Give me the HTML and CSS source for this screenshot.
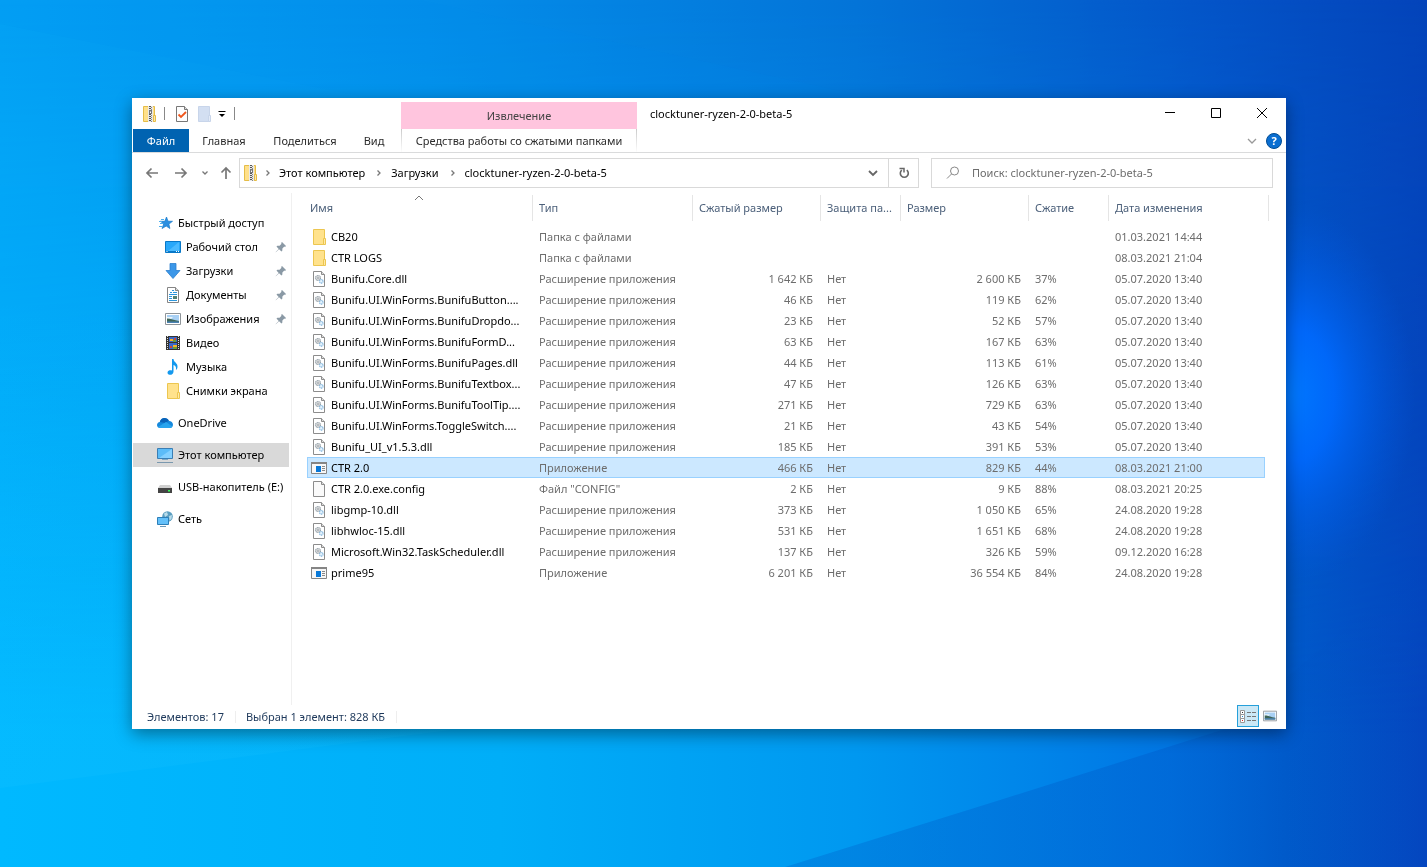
FILE: index.html
```html
<!DOCTYPE html>
<html lang="ru">
<head>
<meta charset="utf-8">
<title>clocktuner-ryzen-2-0-beta-5</title>
<link rel="stylesheet" href="styles.css">
</head>
<body>
<svg class="wallpaper" viewBox="0 0 1427 867" preserveAspectRatio="none" aria-hidden="true">
  <defs>
    <linearGradient id="wbase" x1="0" y1="0" x2="1" y2="0"><stop offset="0" stop-color="#04a0f4"/><stop offset=".3" stop-color="#048eea"/><stop offset=".6" stop-color="#0474d8"/><stop offset=".85" stop-color="#0454c8"/><stop offset="1" stop-color="#0444ba"/></linearGradient>
    <linearGradient id="wlow" x1="0" y1="0" x2="1" y2="0"><stop offset="0" stop-color="#00b9ff"/><stop offset=".35" stop-color="#00aef8"/><stop offset=".6" stop-color="#0098f0"/><stop offset=".82" stop-color="#0076e4"/><stop offset=".9" stop-color="#005ccc"/><stop offset="1" stop-color="#0446bf"/></linearGradient>
    <linearGradient id="wfade" x1="0" y1="0" x2="0" y2="1"><stop offset="0" stop-color="#000"/><stop offset=".85" stop-color="#fff"/></linearGradient>
    <linearGradient id="wbeam" x1="0" y1="0" x2="0" y2="1"><stop offset="0" stop-color="#20c4ff" stop-opacity="0"/><stop offset="1" stop-color="#20c4ff" stop-opacity=".16"/></linearGradient>
    <linearGradient id="wwedge" x1="0" y1="0" x2="1" y2="0"><stop offset="0" stop-color="#0050c0" stop-opacity=".26"/><stop offset=".6" stop-color="#0050c0" stop-opacity=".3"/><stop offset="1" stop-color="#0050c0" stop-opacity="0"/></linearGradient>
    <mask id="wmask"><rect width="1427" height="867" fill="url(#wfade)"/></mask>
    <radialGradient id="wglow"><stop offset="0" stop-color="#0078ff"/><stop offset=".35" stop-color="#006aff" stop-opacity=".9"/><stop offset="1" stop-color="#0058e0" stop-opacity="0"/></radialGradient>
  </defs>
  <rect width="1427" height="867" fill="url(#wbase)"/>
  <rect width="1427" height="867" fill="url(#wlow)" mask="url(#wmask)"/>
  <path d="M785 867 1000 800 1225 729 1427 560V867Z" fill="url(#wwedge)"/>
  <path d="M0 788 450 730V300H0Z" fill="url(#wbeam)"/>
  <path d="M0 0V24L400 104H900L420 0Z" fill="#0088f0" opacity=".08"/>
  <ellipse cx="1290" cy="395" rx="125" ry="190" fill="url(#wglow)"/>
</svg>

<svg class="defs" aria-hidden="true">
  <symbol id="folder" viewBox="0 0 16 16"><path d="M2.500.5h11v15h-11z" fill="#ffe28c" stroke="#ecc650"/><path d="M12.500 9.500h2v6h-2z" fill="#ffe9a6" stroke="#ecc650"/></symbol>
  <symbol id="zip" viewBox="0 0 16 16"><path d="M1.500.5h11v15h-11z" fill="#ffe08a" stroke="#e5bd48"/><path d="M11.500 9.500h2v6h-2z" fill="#ffe9a6" stroke="#e5bd48"/><path d="M6 0h5v16H6z" fill="#e8e8e8"/><path d="M8 0v16" stroke="#555" stroke-width="2" stroke-dasharray="1 1"/><path d="M9.500 0v16" stroke="#888" stroke-dasharray="1 1" stroke-dashoffset="1"/><path d="M7 4h3v4H7z" fill="#777"/><path d="M8 5.500h1V7H8z" fill="#fff"/></symbol>
  <symbol id="dll" viewBox="0 0 16 16"><path d="M2.500.5h8l3 3v12h-11z" fill="#fff" stroke="#8c8c8c"/><path d="M10.500.5v3h3" fill="#ddd" stroke="#8c8c8c"/><circle cx="7" cy="7" r="2.500" fill="#e4e4e4" stroke="#98a4ac" stroke-width="1.200" stroke-dasharray="1.200 .5"/><circle cx="7" cy="7" r=".9" fill="#fff" stroke="#8a949a" stroke-width=".7"/><circle cx="10.300" cy="10.300" r="1.800" fill="#e4f2fc" stroke="#86b8de" stroke-width="1.200" stroke-dasharray="1.200 .5"/></symbol>
  <symbol id="file" viewBox="0 0 16 16"><path d="M2.500.5h8l3 3v12h-11z" fill="#fafafa" stroke="#8c8c8c"/><path d="M10.500.5v3h3" fill="#ddd" stroke="#8c8c8c"/></symbol>
  <symbol id="exe" viewBox="0 0 16 16"><path d="M.5 2.500h15v11H.5z" fill="#f7f7f7" stroke="#858585"/><path d="M0 2h16v2H0z" fill="#858585"/><path d="M5 6h5v6H5z" fill="#0878d8"/><path d="M11 6.500h3M11 8.500h3M11 10.500h3" stroke="#888"/></symbol>
  <symbol id="pin" viewBox="0 0 12 12"><path d="M7 1 11 5 10 6 9.300 5.600 7.400 7.500 7.300 9.800 6.400 10.600 4.100 8.300.8 11.300.7 11 3.700 7.900 1.500 5.600 2.300 4.700 4.600 4.700 6.500 2.800 6.100 2Z" fill="#8a99a5"/></symbol>
  <symbol id="picture" viewBox="0 0 16 16"><path d="M.5 2.500h15v11H.5z" fill="#fff" stroke="#8e9499"/><path d="M2 4h12v8H2z" fill="#a8d0f4"/><path d="M2 6h6l-2 2H2z" fill="#e8f4fc"/><path d="M2 7.500c4 0 7 1.500 12 2.500v2H2z" fill="#3e6658"/><path d="M2 10.500h12V12H2z" fill="#4b82b4"/></symbol>
  <symbol id="chev" viewBox="0 0 8 8"><path d="M2.500 1.500 5 4 2.500 6.500" fill="none" stroke="#777" stroke-width="1.300"/></symbol>
</svg>

<main class="window">
  <header class="top">
    <div class="quick">
      <svg class="i16"><use href="#zip"/></svg><i class="bar"></i>
      <button class="q1" aria-label="Свойства"><svg class="i16" viewBox="0 0 16 16"><path d="M2.500.5h8l3 3v12h-11z" fill="#fdfdfd" stroke="#777"/><path d="M10.500.5v3h3" fill="#ddd" stroke="#777"/><path d="m4.500 8.500 2.500 2.500 5-5" fill="none" stroke="#f0561c" stroke-width="1.800"/></svg></button>
      <button class="q2" aria-label="Новая папка"><svg class="i16" viewBox="0 0 16 16"><path d="M2.500.5h11v15h-11z" fill="#d3dff2" stroke="#c8d5ea"/><path d="M12.500 9.500h2v6h-2z" fill="#e3ebf8" stroke="#c8d5ea"/></svg></button>
      <button class="q3" aria-label="Настройка панели"><svg class="i8" viewBox="0 0 8 8"><path d="M.5 1.500h7" stroke="#000"/><path d="M1 4h6L4 7z"/></svg></button><i class="bar"></i>
    </div>
    <nav class="tabs">
      <button class="tab file">Файл</button><button class="tab home">Главная</button><button class="tab share">Поделиться</button><button class="tab view">Вид</button>
    </nav>
    <div class="context"><span class="extract">Извлечение</span><button class="tab tools">Средства работы со сжатыми папками</button></div>
    <h1 class="title">clocktuner-ryzen-2-0-beta-5</h1>
    <div class="controls">
      <button aria-label="Свернуть"><svg viewBox="0 0 12 12"><path d="M1 5.500h10" stroke="#000"/></svg></button>
      <button aria-label="Развернуть"><svg viewBox="0 0 12 12"><path d="M1.500 1.500h9v9h-9z" fill="none" stroke="#000"/></svg></button>
      <button aria-label="Закрыть"><svg viewBox="0 0 12 12"><path d="m1 1 10 10M11 1 1 11" stroke="#000"/></svg></button>
    </div>
    <div class="help">
      <button aria-label="Развернуть ленту"><svg class="i12" viewBox="0 0 12 12"><path d="m2 4 4 4 4-4" fill="none" stroke="#999" stroke-width="1.300"/></svg></button>
      <button class="round" aria-label="Справка">?</button>
    </div>
  </header>

  <div class="navbar">
    <div class="arrows">
      <button aria-label="Назад"><svg viewBox="0 0 14 14"><path d="M13 7H2M6.500 2.500 2 7l4.500 4.500" fill="none" stroke="#777" stroke-width="1.700"/></svg></button>
      <button aria-label="Вперёд"><svg viewBox="0 0 14 14"><path d="M1 7h11M7.500 2.500 12 7l-4.500 4.500" fill="none" stroke="#777" stroke-width="1.700"/></svg></button>
      <button aria-label="Последние"><svg class="i8" viewBox="0 0 8 8"><path d="m1.500 2.500 2.500 2.500 2.500-2.500" fill="none" stroke="#777" stroke-width="1.300"/></svg></button>
      <button aria-label="Вверх"><svg viewBox="0 0 14 14"><path d="M7 13V2M2.500 6.500 7 2l4.500 4.500" fill="none" stroke="#777" stroke-width="1.700"/></svg></button>
    </div>
    <div class="address">
      <svg class="i16"><use href="#zip"/></svg>
      <svg class="i8"><use href="#chev"/></svg><a href="#">Этот компьютер</a>
      <svg class="i8"><use href="#chev"/></svg><a href="#">Загрузки</a>
      <svg class="i8"><use href="#chev"/></svg><a href="#">clocktuner-ryzen-2-0-beta-5</a>
      <button class="drop" aria-label="Журнал"><svg class="i12" viewBox="0 0 12 12"><path d="m2 4 4 4 4-4" fill="none" stroke="#666" stroke-width="1.800"/></svg></button>
      <button class="refresh" aria-label="Обновить"><svg class="i12" viewBox="0 0 12 12"><path d="M8.800 3.200a4 4 0 1 1-5 0" fill="none" stroke="#666" stroke-width="1.600"/><path d="M1.500 1.500h4.500v4" fill="none" stroke="#666" stroke-width="1.500"/></svg></button>
    </div>
    <label class="search"><svg class="i14" viewBox="0 0 14 14"><circle cx="8.500" cy="5" r="4" fill="none" stroke="#888"/><path d="M5.500 8 1 12.500" stroke="#888"/></svg><input type="search" aria-label="Поиск" placeholder="Поиск: clocktuner-ryzen-2-0-beta-5"></label>
  </div>

  <div class="content">
    <aside class="side">
      <a class="node" href="#"><svg class="i16" viewBox="0 0 16 16"><path d="m9.500 2 1.500 4.200 4.500.1-3.600 2.800 1 4.400-3.700-2.400L5 13.500 6.700 9 3.500 6.300h4.300z" fill="#2b8fe0" stroke="#1479cc" stroke-width=".7"/><path d="M4 4.500h3M2 6.500h3M3 8.500h3M2 11.500h3" stroke="#4fb0ee"/></svg>Быстрый доступ</a>
      <a class="node sub" href="#"><svg class="i16" viewBox="0 0 16 16"><path d="M.5 2.500h15v11H.5z" fill="#28a8fa" stroke="#0878c8"/><path d="M3 12 14 3v9z" fill="#4abaff"/><path d="M1 12.500h14" stroke="#0878c8"/><path d="M1.500 12.500h1M11 12.500h1M13 12.500h1" stroke="#fff"/></svg>Рабочий стол<svg class="pin"><use href="#pin"/></svg></a>
      <a class="node sub" href="#"><svg class="i16" viewBox="0 0 16 16"><path d="M5 .5h6v7h4L8 15.500 1 7.500h4z" fill="#3b97e8" stroke="#2b7fce" stroke-width=".8"/></svg>Загрузки<svg class="pin"><use href="#pin"/></svg></a>
      <a class="node sub" href="#"><svg class="i16" viewBox="0 0 16 16"><path d="M2.500.5h8l3 3v12h-11z" fill="#fff" stroke="#858585"/><path d="M10.500.5v3h3" fill="#ddd" stroke="#858585"/><path d="M7 3.500h2M5 5.500h2M8 5.500h4M4 7.500h8M4 9.500h3M4 11.500h3M4 13.500h8" stroke="#2c96dc"/><path d="M8 9h4v3H8z" fill="#538276"/></svg>Документы<svg class="pin"><use href="#pin"/></svg></a>
      <a class="node sub" href="#"><svg class="i16"><use href="#picture"/></svg>Изображения<svg class="pin"><use href="#pin"/></svg></a>
      <a class="node sub" href="#"><svg class="i16" viewBox="0 0 16 16"><path d="M1 1h14v14H1z" fill="#333"/><path d="M2.500 1v14M13.500 1v14" stroke="#ddd" stroke-dasharray="1 1"/><path d="M4 2h8v5H4zM4 8h8v6H4z" fill="#3a67c8"/><path d="M5 4h3v2H5zM8 10h4v2H8z" fill="#f0b429"/><path d="M9 3h2v2H9zM5 11h2v2H5z" fill="#c64b35"/><path d="M8 5h3v2H8zM8 12h4v2H8z" fill="#6a9c39"/></svg>Видео</a>
      <a class="node sub" href="#"><svg class="i16" viewBox="0 0 16 16"><path d="M7 0h1.500c.3 3.500 4.500 4 4 8-.1 1.500-.8 2.500-1.600 3 .8-3-.9-4.500-2.400-5v6.500C8.500 15 6.500 16 4.500 15.800 2 15.500 1.800 12 4.500 11.300 5.500 11 6.300 11.200 7 11.600z" fill="#1499ee"/></svg>Музыка</a>
      <a class="node sub" href="#"><svg class="i16"><use href="#folder"/></svg>Снимки экрана</a>
      <a class="node group" href="#"><svg class="i16" viewBox="0 0 16 16"><path d="M3.500 13C1.300 13 0 11.700 0 10c0-1.600 1.200-2.800 2.800-3C3.500 4.500 5.300 3 7.500 3c2 0 3.500 1 4.300 2.800C14.300 6 16 7.600 16 9.800 16 11.700 14.500 13 12.700 13z" fill="#1588dc"/><path d="M2.800 7C3.500 4.500 5.300 3 7.500 3c2 0 3.500 1 4.300 2.800L8 8z" fill="#0a62b8"/><path d="m1 12 8-5 6.500 4.500c-.6 1-1.600 1.500-2.800 1.500H3.500c-1 0-1.900-.4-2.500-1z" fill="#28a4ee"/></svg>OneDrive</a>
      <a class="node group current" href="#"><svg class="i16" viewBox="0 0 16 16"><path d="M.5 1.500h15v10H.5z" fill="#5cbcf8" stroke="#3a7eb4"/><path d="M2 11 15 2v9z" fill="#84d0ff"/><path d="M5 12.500h6" stroke="#7fa8c4"/><path d="M0 15.500h16" stroke="#7a98ae"/></svg>Этот компьютер</a>
      <a class="node group" href="#"><svg class="i16" viewBox="0 0 16 16"><path d="M3 6h10l2 3H1z" fill="#d0d0d0"/><path d="M1 9h14v5H1z" fill="#444"/><path d="M11 11h2v1.500h-2z" fill="#3f5"/></svg>USB-накопитель (E:)</a>
      <a class="node group" href="#"><svg class="i16" viewBox="0 0 16 16"><circle cx="10.500" cy="5.500" r="5.300" fill="#5a9dc0"/><path d="M7 2.500 10 1l1 3-3 2zM12 5l3-1-.5 4-2 1.500z" fill="#b9dcea"/><path d="M.5 6.500h11v7H.5z" fill="#63c0fa" stroke="#2d7fb8"/><path d="M3 15.500h6" stroke="#6a98b8"/></svg>Сеть</a>
    </aside>

    <section class="list">
      <table class="files">
        <colgroup><col class="c-name"><col class="c-wide"><col class="c-mid"><col class="c-small"><col class="c-mid"><col class="c-small"><col class="c-date"></colgroup>
        <thead><tr><th class="sorted">Имя<svg class="sort" viewBox="0 0 10 6"><path d="M1 5 5 1l4 4" fill="none" stroke="#777"/></svg></th><th>Тип</th><th>Сжатый размер</th><th>Защита па...</th><th>Размер</th><th>Сжатие</th><th>Дата изменения</th></tr></thead>
        <tbody>
        <tr><td><svg class="i16"><use href="#folder"/></svg>CB20</td><td>Папка с файлами</td><td></td><td></td><td></td><td></td><td>01.03.2021 14:44</td></tr>
        <tr><td><svg class="i16"><use href="#folder"/></svg>CTR LOGS</td><td>Папка с файлами</td><td></td><td></td><td></td><td></td><td>08.03.2021 21:04</td></tr>
        <tr><td><svg class="i16"><use href="#dll"/></svg>Bunifu.Core.dll</td><td>Расширение приложения</td><td>1 642 КБ</td><td>Нет</td><td>2 600 КБ</td><td>37%</td><td>05.07.2020 13:40</td></tr>
        <tr><td><svg class="i16"><use href="#dll"/></svg>Bunifu.UI.WinForms.BunifuButton....</td><td>Расширение приложения</td><td>46 КБ</td><td>Нет</td><td>119 КБ</td><td>62%</td><td>05.07.2020 13:40</td></tr>
        <tr><td><svg class="i16"><use href="#dll"/></svg>Bunifu.UI.WinForms.BunifuDropdo...</td><td>Расширение приложения</td><td>23 КБ</td><td>Нет</td><td>52 КБ</td><td>57%</td><td>05.07.2020 13:40</td></tr>
        <tr><td><svg class="i16"><use href="#dll"/></svg>Bunifu.UI.WinForms.BunifuFormD...</td><td>Расширение приложения</td><td>63 КБ</td><td>Нет</td><td>167 КБ</td><td>63%</td><td>05.07.2020 13:40</td></tr>
        <tr><td><svg class="i16"><use href="#dll"/></svg>Bunifu.UI.WinForms.BunifuPages.dll</td><td>Расширение приложения</td><td>44 КБ</td><td>Нет</td><td>113 КБ</td><td>61%</td><td>05.07.2020 13:40</td></tr>
        <tr><td><svg class="i16"><use href="#dll"/></svg>Bunifu.UI.WinForms.BunifuTextbox...</td><td>Расширение приложения</td><td>47 КБ</td><td>Нет</td><td>126 КБ</td><td>63%</td><td>05.07.2020 13:40</td></tr>
        <tr><td><svg class="i16"><use href="#dll"/></svg>Bunifu.UI.WinForms.BunifuToolTip....</td><td>Расширение приложения</td><td>271 КБ</td><td>Нет</td><td>729 КБ</td><td>63%</td><td>05.07.2020 13:40</td></tr>
        <tr><td><svg class="i16"><use href="#dll"/></svg>Bunifu.UI.WinForms.ToggleSwitch....</td><td>Расширение приложения</td><td>21 КБ</td><td>Нет</td><td>43 КБ</td><td>54%</td><td>05.07.2020 13:40</td></tr>
        <tr><td><svg class="i16"><use href="#dll"/></svg>Bunifu_UI_v1.5.3.dll</td><td>Расширение приложения</td><td>185 КБ</td><td>Нет</td><td>391 КБ</td><td>53%</td><td>05.07.2020 13:40</td></tr>
        <tr class="selected"><td><svg class="i16"><use href="#exe"/></svg>CTR 2.0</td><td>Приложение</td><td>466 КБ</td><td>Нет</td><td>829 КБ</td><td>44%</td><td>08.03.2021 21:00</td></tr>
        <tr><td><svg class="i16"><use href="#file"/></svg>CTR 2.0.exe.config</td><td>Файл "CONFIG"</td><td>2 КБ</td><td>Нет</td><td>9 КБ</td><td>88%</td><td>08.03.2021 20:25</td></tr>
        <tr><td><svg class="i16"><use href="#dll"/></svg>libgmp-10.dll</td><td>Расширение приложения</td><td>373 КБ</td><td>Нет</td><td>1 050 КБ</td><td>65%</td><td>24.08.2020 19:28</td></tr>
        <tr><td><svg class="i16"><use href="#dll"/></svg>libhwloc-15.dll</td><td>Расширение приложения</td><td>531 КБ</td><td>Нет</td><td>1 651 КБ</td><td>68%</td><td>24.08.2020 19:28</td></tr>
        <tr><td><svg class="i16"><use href="#dll"/></svg>Microsoft.Win32.TaskScheduler.dll</td><td>Расширение приложения</td><td>137 КБ</td><td>Нет</td><td>326 КБ</td><td>59%</td><td>09.12.2020 16:28</td></tr>
        <tr><td><svg class="i16"><use href="#exe"/></svg>prime95</td><td>Приложение</td><td>6 201 КБ</td><td>Нет</td><td>36 554 КБ</td><td>84%</td><td>24.08.2020 19:28</td></tr>
        </tbody>
      </table>
    </section>
  </div>

  <footer class="status">
    <span>Элементов: 17</span><span>Выбран 1 элемент: 828 КБ</span>
    <div class="views">
      <button class="on" aria-label="Таблица"><svg viewBox="0 0 18 16"><path d="M1.500 2.500h4v4h-4zM1.500 6.500h4v4h-4zM1.500 10.500h4v4h-4z" fill="#fff" stroke="#999"/><path d="M8 4.500h4M13 4.500h4M8 8.500h4M13 8.500h4M8 12.500h4M13 12.500h4" stroke="#777"/><path d="M3 4h1v1H3z" fill="#333"/><path d="M3 8h1v1H3z" fill="#28c"/><path d="M3 12h1v1H3z" fill="#d22"/></svg></button>
      <button aria-label="Крупные значки"><svg viewBox="0 0 16 16"><use href="#picture"/></svg></button>
    </div>
  </footer>
</main>
</body>
</html>
```
FILE: styles.css
```css
* { box-sizing: border-box; }
body {
  margin: 0;
  min-height: 100vh;
  padding: 98px 141px 138px 132px;
  display: flex;
  background: #0484e4;
  font: 11px/16px "Noto Sans", "Open Sans", sans-serif;
  color: #000;
}
button, input { font: inherit; color: inherit; border: 0; background: none; padding: 0; margin: 0; }
button { display: flex; align-items: center; justify-content: center; }
a { color: inherit; text-decoration: none; }
svg { display: block; flex: none; }
.wallpaper { position: fixed; inset: 0; width: 100%; height: 100%; z-index: -1; }
.defs { position: absolute; width: 0; height: 0; }
.i16 { width: 16px; height: 16px; }
.i14 { width: 14px; height: 14px; }
.i12 { width: 12px; height: 12px; }
.i8 { width: 8px; height: 8px; }

.window {
  flex: 1;
  min-width: 0;
  display: flex;
  flex-direction: column;
  background: #fff;
  box-shadow: 0 5px 16px rgba(0, 0, 0, .4);
}

/* Title bar and ribbon tabs share one grid */
.top {
  display: grid;
  grid-template-columns: 269px 236px 1fr auto;
  grid-template-rows: 31px 23px;
  border-bottom: 1px solid #dadbdc;
}
.quick { grid-area: 1 / 1; display: flex; align-items: center; padding-left: 10px; }
.bar { width: 1px; height: 13px; background: #888; margin-left: 6px; }
.q1 { margin-left: 9px; }
.q2 { margin-left: 6px; }
.q3 { margin-left: 6px; }
.q3 + .bar { margin-left: 8px; }
.tabs { grid-area: 2 / 1; display: flex; padding-left: 1px; }
.tab { color: #2b2b2b; justify-content: center; }
.file { width: 56px; background: #0063b1; color: #fff; }
.home { width: 70px; }
.share { width: 92px; }
.view { width: 46px; }
.context {
  grid-area: 1 / 2 / 3 / 3;
  display: grid;
  grid-template-rows: 27px 23px;
  padding-top: 4px;
}
.extract { background: #ffc5de; display: flex; align-items: center; justify-content: center; color: #444; }
.tools {
  border-left: 1px solid;
  border-right: 1px solid;
  border-image: linear-gradient(#c8c8c8, #fff) 1;
}
.title { grid-area: 1 / 3; margin: 0; font-size: 11px; font-weight: 400; align-self: center; padding-left: 13px; }
.controls { grid-area: 1 / 4; display: flex; padding: 0 1px 2px 0; }
.controls button { width: 46px; }
.controls svg { width: 12px; height: 12px; }
.help { grid-area: 2 / 4; display: flex; justify-content: flex-end; align-items: center; gap: 8px; padding-right: 4px; }
.round {
  width: 16px;
  height: 16px;
  border-radius: 50%;
  border: 1px solid #004c94;
  background: #0a6ed1;
  color: #fff;
  font-weight: 700;
}

.navbar { display: flex; padding: 5px 13px 5px 13px; }
.arrows { display: flex; align-items: center; width: 94px; gap: 15px; }
.arrows svg { width: 14px; height: 14px; }
.arrows .i8 { width: 8px; height: 8px; }
.arrows button:nth-child(3) { margin-left: -2px; }
.arrows button:nth-child(4) { margin-left: -5px; }
.address { flex: 1; height: 30px; border: 1px solid #d9d9d9; display: flex; align-items: center; padding-left: 3px; }
.address > .i8 { margin: 0 7px 0 5px; }
.address > .i8 ~ .i8 { margin: 0 8px 0 10px; }
.drop { width: 30px; align-self: stretch; margin-left: auto; }
.refresh { width: 30px; align-self: stretch; border-left: 1px solid #d9d9d9; }
.search { width: 342px; height: 30px; border: 1px solid #d9d9d9; margin-left: 12px; display: flex; align-items: center; padding-left: 14px; gap: 12px; }
.search input { flex: 1; min-width: 0; outline: 0; appearance: none; }
.search input::placeholder { color: #6d6d6d; opacity: 1; }

.content { flex: 1; display: flex; }
.side { width: 160px; border-right: 1px solid #f0f0f0; padding: 18px 2px 0 1px; }
.node { display: flex; align-items: center; gap: 5px; height: 24px; padding-left: 24px; white-space: nowrap; }
.sub { padding-left: 32px; }
.group { margin-top: 8px; }
.current { background: #d9d9d9; }
.pin { width: 12px; height: 12px; margin: 0 2px 0 auto; }

.list { flex: 1; min-width: 0; padding: 2px 0 0 15px; overflow: hidden; }
.files { table-layout: fixed; width: 958px; border-collapse: separate; border-spacing: 0; }
.c-name { width: 226px; }
.c-wide { width: 160px; }
.c-mid { width: 128px; }
.c-small { width: 80px; }
.c-date { width: 156px; }
.files th, .files td { padding: 0 8px 0 6px; text-align: left; font-weight: 400; white-space: nowrap; height: 21px; line-height: 20px; }
.files th { height: 26px; padding-right: 0; color: #4c607a; border-right: 1px solid #e5e5e5; }
.files thead th:first-child { padding-left: 3px; }
.files thead th:last-child { border-right: 0; box-shadow: 3px 0 #fff, 4px 0 #e5e5e5; }
.files td { color: #6d6d6d; }
.files td:first-child { color: #000; padding: 0 0 0 4px; }
.files td:nth-child(3), .files td:nth-child(5) { text-align: right; }
.files tbody::before { content: ""; display: table-row; height: 5px; }
.files td .i16 { display: inline-block; vertical-align: -4px; margin-right: 4px; }
.sorted { position: relative; }
.sort { position: absolute; top: 0; left: 50%; width: 10px; height: 6px; margin-left: -6px; }
.selected { background: #cce8ff; outline: 1px solid #99d1ff; outline-offset: -1px; }

.status { height: 24px; display: flex; align-items: center; padding: 0 5px 0 15px; color: #1e395b; }
.status span { padding-right: 11px; margin-right: 10px; border-right: 1px solid #eee; line-height: 12px; }
.views { margin-left: auto; display: flex; align-self: stretch; }
.views button { width: 22px; height: 22px; }
.views svg { width: 14px; height: 14px; }
.views .on { background: #cbe8f6; border: 1px solid #26a0da; }
.views .on svg { width: 18px; height: 16px; }
```
